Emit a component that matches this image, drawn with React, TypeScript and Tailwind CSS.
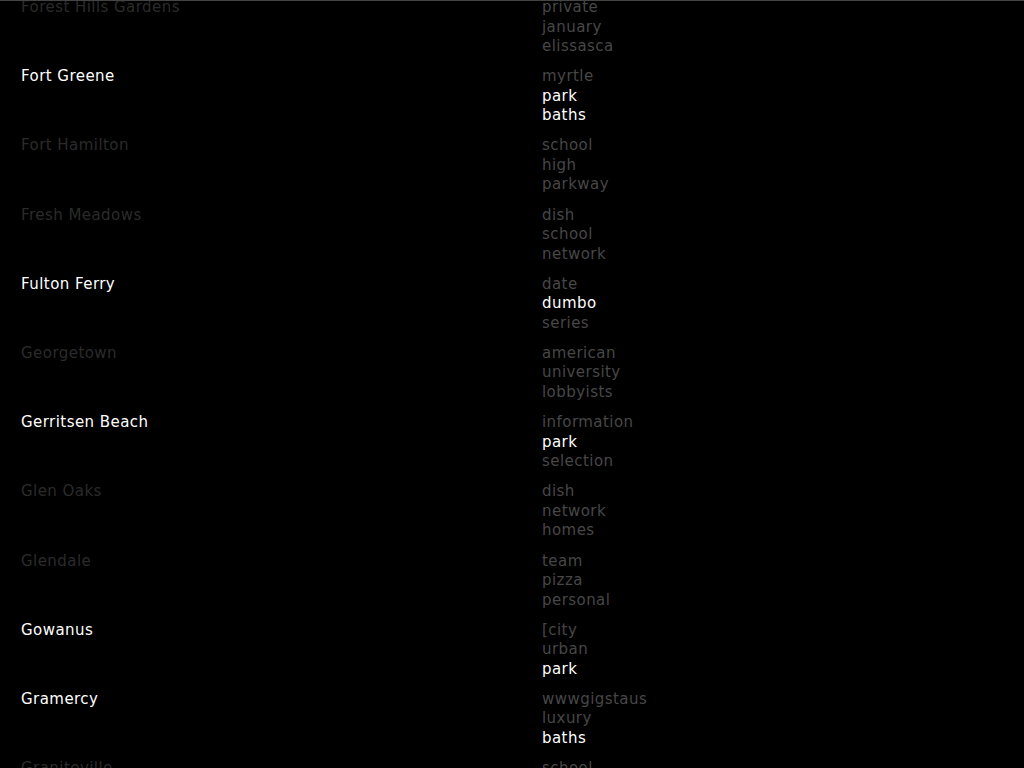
const rows: { name: string; on: boolean; words: [string, boolean][] }[] = [
  { name: "Forest Hills Gardens", on: false, words: [["private", false], ["january", false], ["elissasca", false]] },
  { name: "Fort Greene", on: true, words: [["myrtle", false], ["park", true], ["baths", true]] },
  { name: "Fort Hamilton", on: false, words: [["school", false], ["high", false], ["parkway", false]] },
  { name: "Fresh Meadows", on: false, words: [["dish", false], ["school", false], ["network", false]] },
  { name: "Fulton Ferry", on: true, words: [["date", false], ["dumbo", true], ["series", false]] },
  { name: "Georgetown", on: false, words: [["american", false], ["university", false], ["lobbyists", false]] },
  { name: "Gerritsen Beach", on: true, words: [["information", false], ["park", true], ["selection", false]] },
  { name: "Glen Oaks", on: false, words: [["dish", false], ["network", false], ["homes", false]] },
  { name: "Glendale", on: false, words: [["team", false], ["pizza", false], ["personal", false]] },
  { name: "Gowanus", on: true, words: [["[city", false], ["urban", false], ["park", true]] },
  { name: "Gramercy", on: true, words: [["wwwgigstaus", false], ["luxury", false], ["baths", true]] },
  { name: "Graniteville", on: false, words: [["school", false], ["high", false], ["parkway", false]] },
]

export default function App() {
  return (
    <div className="h-screen overflow-hidden bg-black border-t border-[#444] font-['DejaVu_Sans',sans-serif] text-[15px] leading-[19.5px] tracking-[0.45px]">
      <div className="-mt-[3px]">
        {rows.map((r) => (
          <div key={r.name} className="flex h-[69.2px] pl-[21px]">
            <div className={`w-[521px] ${r.on ? "text-white" : "text-[#2b2b2b]"}`}>{r.name}</div>
            <ul>
              {r.words.map(([w, on], i) => (
                <li key={i} className={on ? "text-white" : "text-[#474747]"}>
                  {w}
                </li>
              ))}
            </ul>
          </div>
        ))}
      </div>
    </div>
  )
}
